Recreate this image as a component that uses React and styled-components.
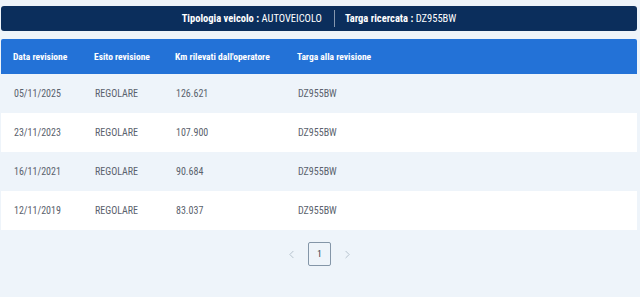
import React from "react";
import styled, { createGlobalStyle } from "styled-components";
import { ChevronLeft, ChevronRight } from "lucide-react";

const GlobalStyle = createGlobalStyle`
  body {
    margin: 0;
    background: #eef4fa;
    font-family: "Liberation Sans Narrow", "Roboto Condensed", Roboto, sans-serif;
  }
`;

const revisioni = [
  { data: "05/11/2025", esito: "REGOLARE", km: "126.621", targa: "DZ955BW" },
  { data: "23/11/2023", esito: "REGOLARE", km: "107.900", targa: "DZ955BW" },
  { data: "16/11/2021", esito: "REGOLARE", km: "90.684", targa: "DZ955BW" },
  { data: "12/11/2019", esito: "REGOLARE", km: "83.037", targa: "DZ955BW" },
];

function App() {
  return (
    <Page>
      <GlobalStyle />
      <InfoBar>
        <InfoItem>
          <b>Tipologia veicolo :</b> AUTOVEICOLO
        </InfoItem>
        <Divider />
        <InfoItem>
          <b>Targa ricercata :</b> DZ955BW
        </InfoItem>
      </InfoBar>
      <Table>
        <HeadRow>
          <Cell>Data revisione</Cell>
          <Cell>Esito revisione</Cell>
          <Cell>Km rilevati dall'operatore</Cell>
          <Cell>Targa alla revisione</Cell>
        </HeadRow>
        {revisioni.map((r, i) => (
          <Row key={r.data} $striped={i % 2 === 0}>
            <Cell>{r.data}</Cell>
            <Cell>{r.esito}</Cell>
            <Cell>{r.km}</Cell>
            <Cell>{r.targa}</Cell>
          </Row>
        ))}
      </Table>
      <Pagination>
        <Arrow>
          <ChevronLeft size={13} strokeWidth={1.5} />
        </Arrow>
        <PageBox>1</PageBox>
        <Arrow>
          <ChevronRight size={13} strokeWidth={1.5} />
        </Arrow>
      </Pagination>
    </Page>
  );
}

const Page = styled.div`
  padding: 6px 3px 0 1px;
`;

const InfoBar = styled.div`
  display: flex;
  justify-content: center;
  align-items: center;
  height: 25px;
  background: #0b2e5c;
  border-radius: 3px;
  color: #ffffff;
  font-size: 10.5px;
`;

const InfoItem = styled.span`
  b {
    font-weight: 700;
  }
`;

const Divider = styled.span`
  width: 1px;
  height: 17px;
  margin: 0 10px 0 12px;
  background: rgba(255, 255, 255, 0.5);
`;

const Table = styled.div`
  margin-top: 8px;
`;

const columns = "81px 81px 122px 1fr";

const HeadRow = styled.div`
  display: grid;
  grid-template-columns: ${columns};
  align-items: center;
  height: 35px;
  padding-left: 12px;
  background: #2372d7;
  border-radius: 2px 2px 0 0;
  color: #ffffff;
  font-size: 9.5px;
  font-weight: 700;
`;

const Row = styled.div`
  display: grid;
  grid-template-columns: ${columns};
  align-items: center;
  height: 39px;
  padding-left: 13px;
  background: ${(p) => (p.$striped ? "#eef4fa" : "#ffffff")};
  color: #5a626d;
  font-size: 10px;
`;

const Cell = styled.span`
  white-space: nowrap;
`;

const Pagination = styled.div`
  display: flex;
  justify-content: center;
  align-items: center;
  gap: 10px;
  margin-top: 12px;
  padding-left: 1px;
`;

const Arrow = styled.span`
  display: flex;
  color: #a9b6c3;
`;

const PageBox = styled.div`
  box-sizing: border-box;
  display: flex;
  justify-content: center;
  align-items: center;
  width: 23px;
  height: 24px;
  border: 1px solid #8496a8;
  border-radius: 2px;
  color: #2b3440;
  font-size: 9px;
`;

export default App;
